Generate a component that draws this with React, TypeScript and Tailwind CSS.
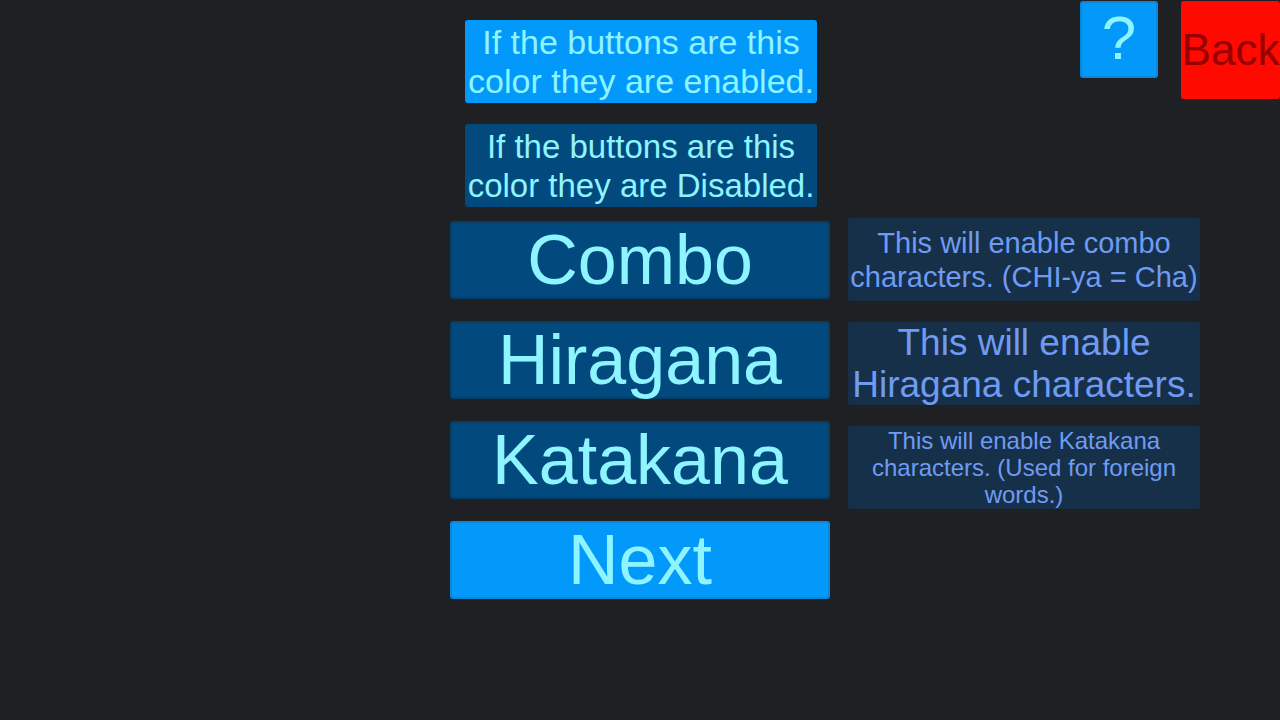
const font = { fontFamily: '"Liberation Sans", Arial, sans-serif' }

function InfoBox({ bg, size, children }: { bg: string; size: string; children: React.ReactNode }) {
  return (
    <div
      className={`ml-[15px] flex h-[83px] w-[352px] items-center justify-center rounded-[3px] text-center leading-[39px] text-[#8ef4ff] ${size} ${bg}`}
    >
      <span className="whitespace-nowrap">{children}</span>
    </div>
  )
}

function BigButton({ label, enabled }: { label: string; enabled?: boolean }) {
  return (
    <button
      className={`flex h-[78px] w-[380px] items-center justify-center rounded-[3px] border-2 text-[70px] leading-none text-[#8ef4ff] ${
        enabled ? 'border-[#0a86dd] bg-[#0399fb]' : 'border-[#073e66] bg-[#024a7e]'
      }`}
    >
      {label}
    </button>
  )
}

function Description({ size, children }: { size: string; children: React.ReactNode }) {
  return (
    <div
      className={`flex h-[83px] w-[352px] items-center justify-center rounded-[3px] bg-[#17304a] text-center text-[#6f9bf2] ${size}`}
    >
      <div>{children}</div>
    </div>
  )
}

export default function App() {
  return (
    <div style={font} className="flex h-[720px] w-[1280px] overflow-hidden bg-[#1f2024] pl-[450px]">
      {/* Left column */}
      <div className="flex w-[380px] flex-col pt-[20px]">
        <InfoBox bg="bg-[#0399fb]" size="text-[34px]">
          If the buttons are this
          <br />
          color they are enabled.
        </InfoBox>
        <div className="mt-[21px]">
          <InfoBox bg="bg-[#024a7e]" size="text-[33px]">
            If the buttons are this
            <br />
            color they are Disabled.
          </InfoBox>
        </div>
        <div className="mt-[14px] flex flex-col gap-[22px]">
          <BigButton label="Combo" />
          <BigButton label="Hiragana" />
          <BigButton label="Katakana" />
          <BigButton label="Next" enabled />
        </div>
      </div>

      {/* Right column */}
      <div className="ml-[18px] flex flex-1 flex-col">
        <div className="flex justify-end gap-[23px] pt-[1px]">
          <button className="flex h-[77px] w-[78px] items-center justify-center rounded-[3px] border-2 border-[#0a86dd] bg-[#0399fb] pb-[4px] text-[62px] leading-none text-[#8ef4ff]">
            ?
          </button>
          <button className="flex h-[98px] w-[99px] items-center justify-center overflow-hidden whitespace-nowrap rounded-[3px] bg-[#ff0a00] text-[44px] leading-none text-[#960000]">
            Back
          </button>
        </div>
        <div className="mt-[119px] flex flex-col gap-[21px]">
          <Description size="text-[29px] leading-[34px]">
            This will enable combo
            <br />
            characters. (CHI-ya = Cha)
          </Description>
          <Description size="text-[37px] leading-[42px]">
            This will enable
            <br />
            Hiragana characters.
          </Description>
          <Description size="text-[24px] leading-[27px]">
            This will enable Katakana
            <br />
            characters. (Used for foreign
            <br />
            words.)
          </Description>
        </div>
      </div>
    </div>
  )
}
